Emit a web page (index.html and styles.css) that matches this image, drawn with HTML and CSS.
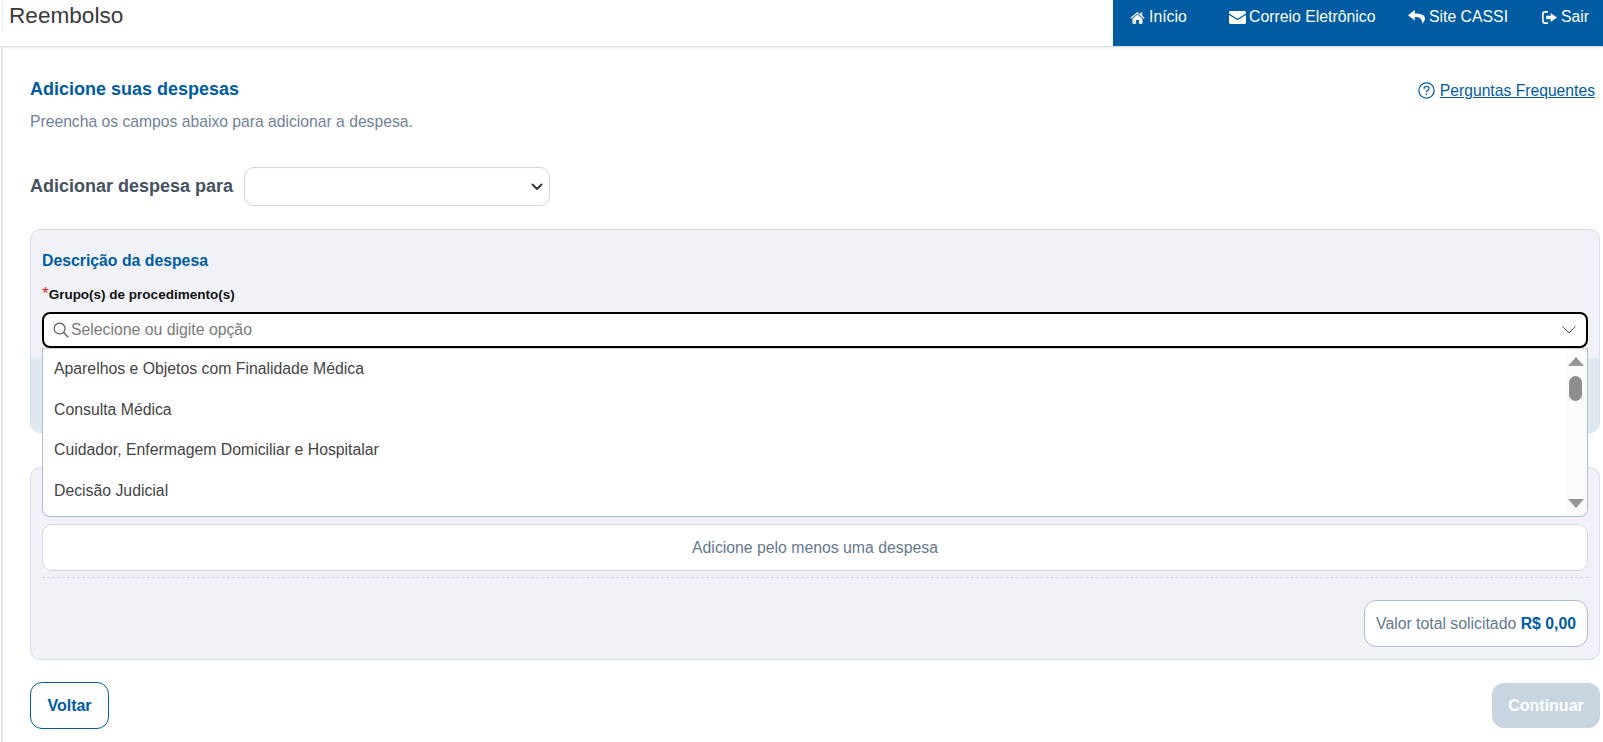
FILE: index.html
```html
<!DOCTYPE html>
<html lang="pt-BR">
<head>
<meta charset="utf-8">
<title>Reembolso</title>
<link rel="stylesheet" href="styles.css">
</head>
<body>
<header class="topbar">
  <h1 class="app-title">Reembolso</h1>
  <nav class="topnav">
    <a class="nav-item nav-inicio"><svg class="nav-icon" viewBox="0 0 16 14"><path fill="#fff" d="M8 1 .3 7.4l.8.9L8 2.6l6.9 5.7.8-.9-2.6-2.2V1.6h-2v2.2zM2.6 8.3V13.6h3.9V9.7h3V13.6h3.9V8.3L8 3.9z"/></svg>Início</a>
    <a class="nav-item nav-mail"><svg class="nav-icon icon-mail" viewBox="0 0 17 13"><path fill="#fff" d="M1.6 0h13.8c.9 0 1.6.7 1.6 1.500 0 .6-.4 1.100-.9 1.500L9.400 7.300c-.6.4-1.200.4-1.800 0L.9 3C.4 2.600 0 2.100 0 1.500 0 .7.7 0 1.600 0zM0 3.900l7.300 4.700c.8.5 1.600.5 2.400 0L17 3.900v7.600c0 .8-.7 1.500-1.600 1.500H1.600C.7 13 0 12.300 0 11.500z"/></svg>Correio Eletrônico</a>
    <a class="nav-item nav-site"><svg class="nav-icon icon-reply" viewBox="0 0 17 14"><path fill="#fff" d="M6.800 0 0 5.200l6.800 5.200V7c4.200 0 6.800.8 7.600 6.700C15.600 12 17 10.800 17 8.300 17 4.800 13 3.400 6.800 3.400z"/></svg>Site CASSI</a>
    <a class="nav-item nav-sair"><svg class="nav-icon" viewBox="0 0 15 13"><path fill="#fff" d="M3 0h3v1.700H3.200c-.8 0-1.500.7-1.500 1.500v6.600c0 .8.700 1.500 1.500 1.500H6V13H3c-1.700 0-3-1.300-3-3V3c0-1.700 1.300-3 3-3zM8.700 2 15 6.500 8.700 11V8.300H4.200V4.700h4.500z"/></svg>Sair</a>
  </nav>
</header>

<main class="page">
  <div class="page-head">
    <div>
      <h2 class="page-title">Adicione suas despesas</h2>
      <p class="page-sub">Preencha os campos abaixo para adicionar a despesa.</p>
    </div>
    <a class="faq"><svg class="faq-icon" viewBox="0 0 16 16"><circle cx="8" cy="8" r="7.200" fill="none" stroke="#005ca2" stroke-width="1.200"/><path d="M5.700 6.300c0-1.400 1-2.200 2.300-2.200s2.300.8 2.300 2c0 1.800-2.300 1.700-2.300 3.500" fill="none" stroke="#005ca2" stroke-width="1.200"/><rect x="7.300" y="10.900" width="1.400" height="1.400" fill="#005ca2"/></svg><span class="faq-text">Perguntas Frequentes</span></a>
  </div>

  <div class="for-row">
    <label class="for-label">Adicionar despesa para</label>
    <div class="for-select"><svg class="for-chevron" viewBox="0 0 12 8"><path d="M1.500 1.500 6 6l4.500-4.500" fill="none" stroke="#343a40" stroke-width="2" stroke-linecap="round" stroke-linejoin="round"/></svg></div>
  </div>

  <section class="panel panel-desc">
    <h3 class="panel-title">Descrição da despesa</h3>
    <label class="field-label"><span class="req">*</span>Grupo(s) de procedimento(s)</label>
    <div class="combo">
      <div class="combo-input">
        <svg class="search-icon" viewBox="0 0 17 17"><circle cx="7" cy="7" r="5.800" fill="none" stroke="#555" stroke-width="1.200"/><path d="m11.200 11.200 5 5" stroke="#555" stroke-width="1.300" fill="none"/></svg>
        <span class="placeholder">Selecione ou digite opção</span>
        <svg class="combo-chevron" viewBox="0 0 14 8"><path d="M.5.500 7 7 13.500.500" fill="none" stroke="#555" stroke-width="1"/></svg>
      </div>
      <div class="combo-list">
        <ul class="options">
          <li>Aparelhos e Objetos com Finalidade Médica</li>
          <li>Consulta Médica</li>
          <li>Cuidador, Enfermagem Domiciliar e Hospitalar</li>
          <li>Decisão Judicial</li>
        </ul>
        <div class="scrollbar">
          <span class="arrow-up"></span>
          <span class="thumb"></span>
          <span class="arrow-down"></span>
        </div>
      </div>
    </div>
    <div class="panel-band"></div>
  </section>

  <section class="panel panel-list">
    <div class="empty">Adicione pelo menos uma despesa</div>
    <div class="dash"></div>
    <div class="total-row">
      <div class="total"><span>Valor total solicitado&nbsp;</span><strong>R$ 0,00</strong></div>
    </div>
  </section>

  <div class="actions">
    <button class="btn btn-back" type="button">Voltar</button>
    <button class="btn btn-next" type="button">Continuar</button>
  </div>
</main>
</body>
</html>
```

FILE: styles.css
```css
* { box-sizing: border-box; }
html, body { margin: 0; padding: 0; height: 100%; }
body {
  font-family: "Liberation Sans", Arial, sans-serif;
  background: #fff;
  color: #333;
  overflow: hidden;
}
.topbar {
  height: 47px;
  display: flex;
  justify-content: space-between;
  align-items: flex-start;
  border-bottom: 1px solid #dcdcdc;
  box-shadow: 0 1px 2px rgba(0,0,0,.08);
}
.app-title {
  margin: 0 0 0 2px;
  height: 33px;
  padding-left: 6px;
  border-left: 1px solid #eee;
  font-size: 22.600px;
  font-weight: 400;
  line-height: 31px;
  color: #3a3a3a;
}
.topnav {
  width: 490px;
  height: 46px;
  background: #005ca2;
  display: flex;
  align-items: flex-start;
  padding: 8px 0 0 17px;
}
.nav-item {
  display: flex;
  align-items: center;
  color: #fff;
  font-size: 15.800px;
  line-height: 18px;
}
.nav-icon { width: 15px; height: 13px; margin-right: 4px; }
.icon-mail { width: 17px; margin-right: 3px; }
.icon-reply { width: 17px; height: 14px; margin-right: 4px; }
.nav-inicio { width: 99px; }
.nav-mail { width: 179px; }
.nav-site { width: 134px; }
.page {
  height: 695px;
  margin-left: 1px;
  border-left: 2px solid #e4e4e4;
  padding: 33px 3px 0 27px;
}
.page-head { display: flex; justify-content: space-between; align-items: flex-start; }
.page-title {
  margin: 0;
  font-size: 18px;
  line-height: 18px;
  font-weight: 700;
  color: #005ca2;
}
.page-sub {
  margin: 15px 0 0;
  font-size: 15.700px;
  line-height: 17px;
  color: #6f8296;
}
.faq { display: flex; align-items: center; margin-top: 2px; margin-right: 5px; color: #005ca2; font-size: 15.700px; line-height: 17px; }
.faq-icon { width: 17px; height: 17px; margin-right: 5px; }
.faq-text { text-decoration: underline; }
.for-row { display: flex; align-items: center; margin-top: 37px; }
.for-label { font-size: 18px; font-weight: 700; color: #44525f; margin-right: 11px; }
.for-select {
  width: 306px;
  height: 39px;
  border: 1px solid #ced8e2;
  border-radius: 10px;
  background: #fff;
  display: flex;
  align-items: center;
  justify-content: flex-end;
  padding-right: 6px;
}
.for-chevron { width: 12px; height: 8px; }
.panel {
  position: relative;
  background: #f0f2f8;
  border: 1px solid #d3deea;
  border-radius: 10px;
  padding: 0 11px;
}
.panel-desc { height: 204px; margin-top: 23px; overflow: visible; }
.panel-title {
  margin: 22px 0 0;
  font-size: 15.800px;
  line-height: 17px;
  font-weight: 700;
  color: #005ca2;
}
.field-label {
  display: block;
  margin-top: 16px;
  height: 17px;
  font-size: 13.500px;
  line-height: 17px;
  font-weight: 700;
  color: #111;
}
.req { color: #e02020; font-size: 17px; font-weight: 400; }
.combo { margin-top: 10px; position: relative; z-index: 2; }
.combo-input {
  height: 36px;
  background: #fff;
  border: 2px solid #000;
  border-radius: 8px;
  display: flex;
  align-items: center;
  padding: 0 9px;
}
.search-icon { width: 16px; height: 16px; margin-right: 2px; flex: none; }
.placeholder { font-size: 15.800px; color: #7a7a7a; flex: 1; }
.combo-chevron { width: 14px; height: 8px; margin-right: 1px; }
.combo-list {
  position: absolute;
  left: 0; right: 0; top: 36px;
  height: 169px;
  background: #fff;
  border: 1px solid #a9bdd1;
  border-top-color: #c5d3e0;
  border-radius: 0 0 8px 8px;
  display: flex;
  overflow: hidden;
}
.options {
  flex: 1;
  list-style: none;
  margin: 0;
  padding: 0;
}
.options li {
  height: 40.500px;
  line-height: 40px;
  padding-left: 11px;
  font-size: 15.800px;
  color: #444;
}
.scrollbar {
  width: 22px;
  background: #fbfbfb;
  position: relative;
}
.arrow-up, .arrow-down {
  position: absolute;
  left: 3px;
  width: 0; height: 0;
  border-left: 8px solid transparent;
  border-right: 8px solid transparent;
}
.arrow-up { top: 8px; border-bottom: 9px solid #979797; }
.arrow-down { bottom: 8px; border-top: 9px solid #979797; }
.thumb {
  position: absolute;
  left: 4px; top: 27px;
  width: 13px; height: 25px;
  border-radius: 7px;
  background: #8e8e8e;
}
.panel-band {
  position: absolute;
  left: 0; right: 0; bottom: 0;
  height: 74px;
  background: #dfe7f1;
  border-radius: 0 0 10px 10px;
}
.panel-list { height: 193px; margin-top: 34px; padding-top: 56px; }
.empty {
  height: 47px;
  background: #fff;
  border: 1px solid #ccd9e6;
  border-radius: 10px;
  display: flex;
  align-items: center;
  justify-content: center;
  font-size: 15.800px;
  color: #64798e;
}
.dash { margin-top: 6px; border-top: 1px dashed #cfd6de; }
.total-row { display: flex; justify-content: flex-end; margin-top: 22px; }
.total {
  height: 47px;
  width: 224px;
  background: #fff;
  border: 1px solid #a9bdd1;
  border-radius: 12px;
  display: flex;
  align-items: center;
  justify-content: center;
  font-size: 15.800px;
  color: #64798e;
}
.total strong { color: #005ca2; }
.actions { display: flex; justify-content: space-between; margin-top: 22px; }
.btn {
  font-family: inherit;
  font-size: 16px;
  font-weight: 700;
  border-radius: 12px;
  height: 47px;
}
.btn-back { width: 79px; background: #fff; border: 1px solid #005ca2; color: #005ca2; padding: 0; }
.btn-next { width: 108px; height: 45px; background: #c7d5e1; border: 0; color: #fff; padding: 0; margin-top: 1px; }
```
